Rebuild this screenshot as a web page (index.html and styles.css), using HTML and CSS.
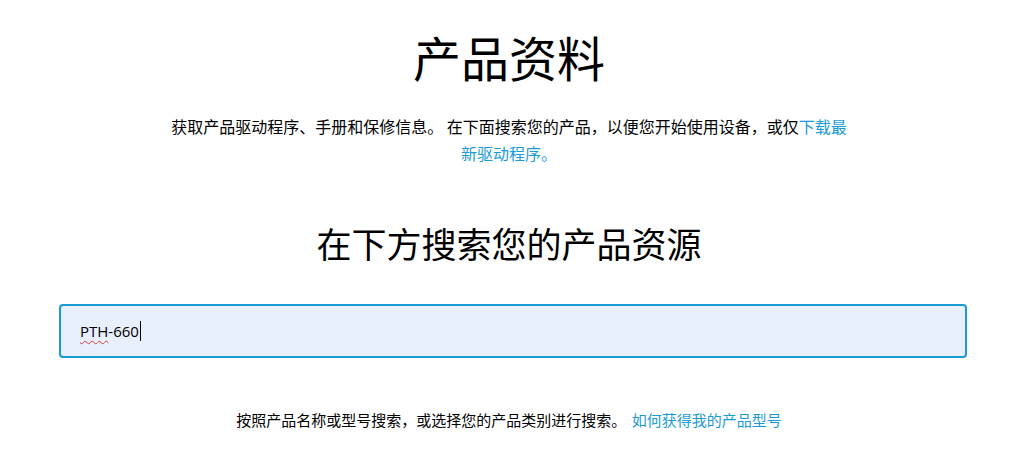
FILE: index.html
```html
<!DOCTYPE html>
<html lang="zh-CN">
<head>
<meta charset="utf-8">
<title>产品资料</title>
<link rel="stylesheet" href="styles.css">
</head>
<body>
<main class="page">
  <h1 class="title">产品资料</h1>
  <p class="intro">获取产品驱动程序、手册和保修信息。 在下面搜索您的产品，以便您开始使用设备，或仅<a class="link" href="#">下载最新驱动程序。</a></p>
  <h2 class="subtitle">在下方搜索您的产品资源</h2>
  <div class="search">
    <div class="search-box"><span class="search-text"><span class="misspelled">PTH</span>-660</span><span class="caret"></span></div>
  </div>
  <p class="hint">按照产品名称或型号搜索，或选择您的产品类别进行搜索。 <a class="link hint-link" href="#">如何获得我的产品型号</a></p>
</main>
</body>
</html>
```
FILE: styles.css
```css
html, body {
  margin: 0;
  padding: 0;
  background: #ffffff;
}
body {
  font-family: "Noto Sans CJK SC", "Noto Sans", sans-serif;
  color: #000000;
}
.page {
  display: flex;
  flex-direction: column;
  align-items: center;
}
.title {
  margin: 26px 0 0;
  font-size: 48px;
  font-weight: 400;
  line-height: 60px;
}
.intro {
  margin: 27px 0 0;
  max-width: 688px;
  font-size: 16px;
  line-height: 27px;
  text-align: center;
}
.link {
  color: #1a9ad6;
  text-decoration: none;
}
.subtitle {
  margin: 54px 0 0;
  font-size: 35px;
  font-weight: 400;
  line-height: 44px;
}
.search {
  align-self: stretch;
  padding: 0 51px 0 59px;
  margin-top: 39px;
}
.search-box {
  box-sizing: border-box;
  height: 54px;
  border: 2px solid #1a9ad6;
  border-radius: 4px;
  background: #e8f0fe;
  display: flex;
  align-items: center;
  padding-left: 19px;
  font-family: "Open Sans", "Noto Sans", sans-serif;
  font-size: 15px;
  color: #000;
}
.misspelled {
  text-decoration: underline wavy #e53935;
  text-decoration-thickness: 1px;
  text-underline-offset: 3px;
}
.caret {
  display: inline-block;
  width: 1px;
  height: 20px;
  background: #000;
  margin-left: 1px;
}
.hint {
  margin: 52px 0 0;
  font-size: 15px;
  line-height: 20px;
  text-align: center;
}
.hint-link {
  margin-left: 2px;
}
```
